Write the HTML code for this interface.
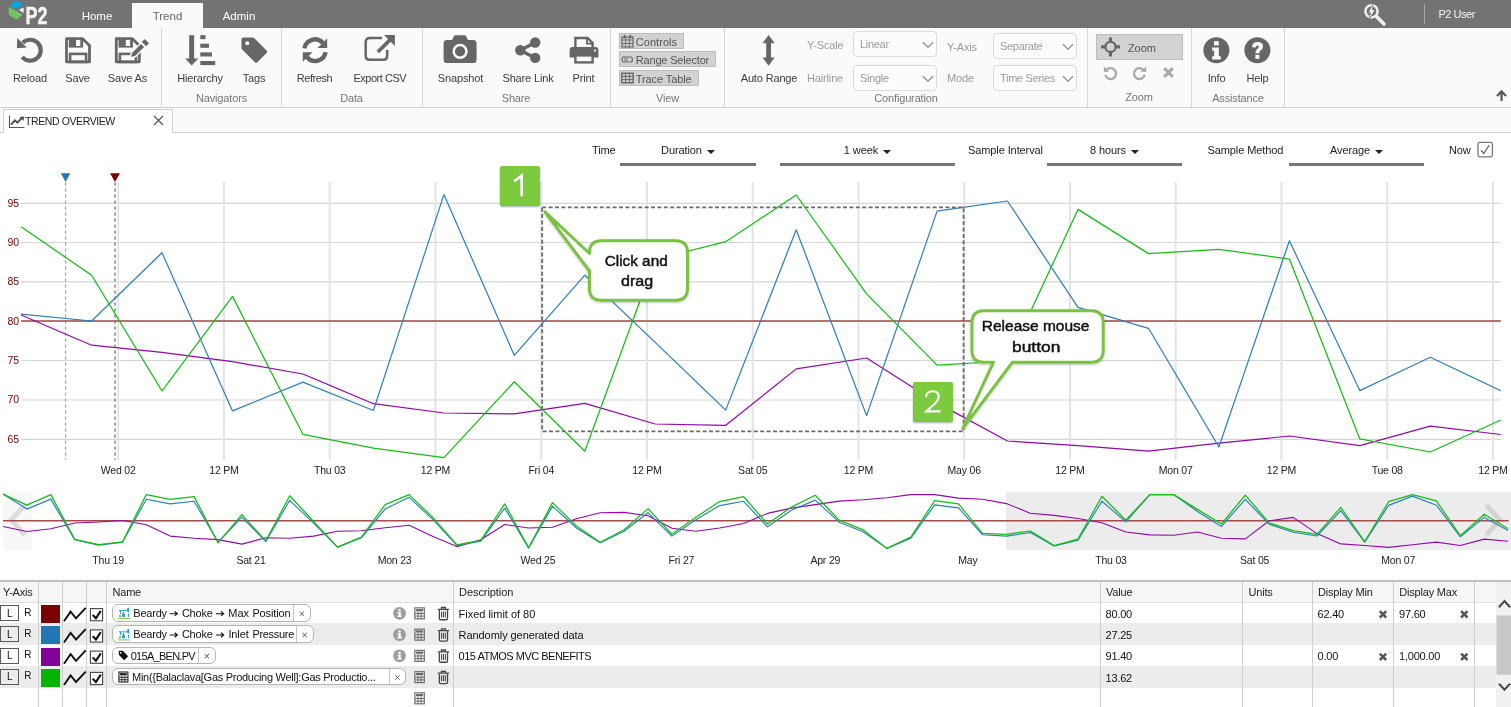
<!DOCTYPE html>
<html><head><meta charset="utf-8">
<style>
html,body{margin:0;padding:0;}
body{width:1511px;height:707px;overflow:hidden;background:#fff;font-family:"Liberation Sans",sans-serif;position:relative;color:#333;}
.abs{position:absolute;}
#topbar{left:0;top:0;width:1511px;height:28px;background:#737373;}
#ribbon{left:0;top:28px;width:1511px;height:79px;background:#fafafa;border-bottom:1px solid #d2d2d2;}
.mtab{position:absolute;top:3px;height:25px;line-height:26px;color:#fff;font-size:11.5px;text-align:center;}
.mtab.act{background:#fafafa;color:#666;}
.sep{position:absolute;top:28px;width:1px;height:79px;background:#d6d6d6;}
.rl{position:absolute;font-size:11px;color:#3c3c3c;white-space:nowrap;transform:translateX(-50%);top:71px;line-height:14px;letter-spacing:-0.15px;}
.gl{position:absolute;font-size:11px;color:#767676;white-space:nowrap;transform:translateX(-50%);top:91px;line-height:14px;letter-spacing:-0.15px;}
.ico{position:absolute;}
.cl{position:absolute;font-size:11px;color:#9a9a9a;white-space:nowrap;line-height:14px;letter-spacing:-0.15px;}
.selbox{position:absolute;width:82px;height:24px;border:1px solid #dcdcdc;border-radius:4px;background:#fcfcfc;font-size:11px;color:#9a9a9a;line-height:23px;}
.selbox span{position:absolute;left:6px;top:1px;letter-spacing:-0.3px;}
.selbox svg{position:absolute;right:2px;top:9px;}
.vbtn{position:absolute;height:13px;background:#d2d2d2;border:1px solid #bdbdbd;font-size:11px;color:#555;line-height:14px;white-space:nowrap;letter-spacing:-0.1px;}
#tabstrip{left:0;top:108px;width:1511px;height:24px;background:#fafafa;border-bottom:1px solid #d0d0d0;}
#doctab{left:3px;top:109px;width:168px;height:23px;background:#fff;border:1px solid #d0d0d0;border-bottom:none;box-sizing:content-box;}
.ctl{position:absolute;font-size:11px;color:#222;white-space:nowrap;line-height:14px;top:143px;letter-spacing:-0.1px;}
.dd{position:absolute;top:143px;height:20px;border-bottom:3px solid #767676;text-align:center;font-size:11px;color:#222;line-height:14px;white-space:nowrap;letter-spacing:-0.1px;}
.dd i{display:inline-block;width:0;height:0;border-left:4px solid transparent;border-right:4px solid transparent;border-top:4px solid #222;margin-left:5px;vertical-align:0px;}
.th{font-size:11px;color:#222;line-height:14px;white-space:nowrap;letter-spacing:-0.2px;}
.td{font-size:11px;color:#111;line-height:14px;white-space:nowrap;letter-spacing:-0.22px;}
</style></head>
<body><div id="wrap" style="position:absolute;left:0;top:0;width:1511px;height:707px;will-change:transform;">
<!--TOPBAR-->
<div id="topbar" class="abs">
<svg class="abs" style="left:0;top:0" width="60" height="28" viewBox="0 0 60 28">
<polygon points="16.3,0.6 23.2,4.2 16.3,8.7 9.8,4.8" fill="#00a8e8"/>
<polygon points="8.7,7 22.9,14.6 16.4,19.5 8.7,14.8" fill="#76c162"/>
<polygon points="18.8,9.7 23.6,7.4 23.6,12.9" fill="#f2f2f2"/>
<text x="25.4" y="23.8" font-family="Liberation Sans" font-weight="700" font-size="24.4" fill="#f2f2f2" stroke="#f2f2f2" stroke-width="0.5" textLength="22" lengthAdjust="spacingAndGlyphs">P2</text>
</svg>
<div class="mtab" style="left:70px;width:54px;">Home</div>
<div class="mtab act" style="left:132px;width:71px;">Trend</div>
<div class="mtab" style="left:210px;width:58px;">Admin</div>
<svg class="abs" style="left:1362px;top:2px" width="26" height="26" viewBox="0 0 26 26">
<circle cx="9.5" cy="9.3" r="6.1" fill="none" stroke="#f0f0f0" stroke-width="2.5"/>
<line x1="14.6" y1="14.6" x2="22" y2="22" stroke="#f0f0f0" stroke-width="3.6" stroke-linecap="round"/>
<path d="M10.8 2.4 L6.8 10.4 L9 10.4 L7.5 16.4 L12.5 8 L10 8 Z" fill="#f0f0f0" stroke="#737373" stroke-width="1.1" paint-order="stroke"/>
</svg>
<div class="abs" style="left:1424px;top:4px;width:1px;height:20px;background:#a9a9a9;"></div>
<div class="abs" style="left:1438.4px;top:7px;font-size:11px;color:#f4f4f4;line-height:14px;letter-spacing:-0.45px;">P2 User</div>
</div>
<!--RIBBON-->
<div id="ribbon" class="abs"></div>
<div class="sep" style="left:161px"></div><div class="sep" style="left:281px"></div><div class="sep" style="left:422px"></div><div class="sep" style="left:610px"></div><div class="sep" style="left:724px"></div><div class="sep" style="left:1087px"></div><div class="sep" style="left:1191px"></div><div class="sep" style="left:1284px"></div>
<div class="rl" style="left:30px">Reload</div><div class="rl" style="left:77.5px">Save</div><div class="rl" style="left:127.5px">Save As</div>
<div class="rl" style="left:200px">Hierarchy</div><div class="rl" style="left:254px">Tags</div>
<div class="rl" style="left:314.5px;letter-spacing:-0.43px">Refresh</div><div class="rl" style="left:379.8px;letter-spacing:-0.48px">Export CSV</div>
<div class="rl" style="left:460.5px">Snapshot</div><div class="rl" style="left:528px">Share Link</div><div class="rl" style="left:583.5px">Print</div>
<div class="rl" style="left:769px">Auto Range</div>
<div class="rl" style="left:1216.5px">Info</div><div class="rl" style="left:1257.5px">Help</div>
<div class="gl" style="left:221.5px">Navigators</div><div class="gl" style="left:351.5px">Data</div><div class="gl" style="left:516px">Share</div><div class="gl" style="left:667.5px">View</div><div class="gl" style="left:906px">Configuration</div><div class="gl" style="left:1139px;top:90px">Zoom</div><div class="gl" style="left:1238px">Assistance</div>
<!-- icons -->
<svg class="ico" style="left:15px;top:34px" width="32" height="32" viewBox="0 0 32 32"><path d="M7.8 8.8 A10.5 10.5 0 1 1 7.2 23" fill="none" stroke="#666" stroke-width="4.2"/><polygon points="2.2,3.9 11.8,13.4 1.9,14.2" fill="#666"/></svg>
<svg class="ico" style="left:64px;top:37px" width="28" height="28" viewBox="0 0 28 28"><path d="M2.5 1.7 H18.6 L25.5 8.6 V24.8 H2.5 Z" fill="none" stroke="#666" stroke-width="2.8" stroke-linejoin="round"/><rect x="4.8" y="1.7" width="14.3" height="8.9" fill="#666"/><rect x="12" y="2.9" width="4.3" height="6.1" fill="#f9f9f9"/><rect x="6.1" y="16.9" width="16" height="8" fill="none" stroke="#666" stroke-width="2.6"/></svg>
<svg class="ico" style="left:113px;top:37px" width="38" height="28" viewBox="0 0 38 28"><g transform="translate(0.8,0)"><path d="M2.5 1.7 H18.6 L25.5 8.6 V24.8 H2.5 Z" fill="none" stroke="#666" stroke-width="2.8" stroke-linejoin="round"/><rect x="4.8" y="1.7" width="14.3" height="8.9" fill="#666"/><rect x="12" y="2.9" width="4.3" height="6.1" fill="#f9f9f9"/><rect x="6.1" y="16.9" width="16" height="8" fill="none" stroke="#666" stroke-width="2.6"/></g><polygon points="17,21 18.5,15.5 28.1,5.9 32.1,9.9 22.5,19.5" fill="#666" stroke="#fafafa" stroke-width="1.4"/><polygon points="29.6,4.9 31.7,2.8 35.2,6.3 33.1,8.4" fill="#666" stroke="#666" stroke-width="1.2" stroke-linejoin="round"/></svg>
<svg class="ico" style="left:184px;top:34px" width="34" height="34" viewBox="0 0 34 34"><rect x="5.2" y="1.2" width="4.9" height="24" fill="#666"/><polygon points="1.2,24.4 14.2,24.4 7.7,31.4" fill="#666"/><rect x="16.3" y="1.1" width="5.2" height="4.1" fill="#666"/><rect x="16.3" y="9.7" width="8.7" height="4.1" fill="#666"/><rect x="16.3" y="18.4" width="11.7" height="4.1" fill="#666"/><rect x="16.3" y="27" width="14.9" height="4.1" fill="#666"/></svg>
<svg class="ico" style="left:240px;top:36px" width="30" height="30" viewBox="0 0 30.8 30.8"><path d="M1.5 3.4 Q1.5 1.5 3.4 1.5 H12.5 Q14 1.5 15 2.5 L27.3 14.8 Q28.6 16.1 27.3 17.4 L17.8 26.9 Q16.5 28.2 15.2 26.9 L2.5 14.2 Q1.5 13.2 1.5 11.8 Z" fill="#666"/><circle cx="7.4" cy="7.4" r="2.1" fill="#fafafa"/></svg>
<svg class="ico" style="left:300px;top:35px" width="30" height="30" viewBox="0 0 30 30"><g transform="translate(15,15.2) scale(0.95) translate(-15,-15)"><path d="M3.8 13 A11.2 11.2 0 0 1 23.4 7.6" fill="none" stroke="#666" stroke-width="4.6"/><polygon points="27.8,2.8 27.8,12.8 17.6,12.8" fill="#666"/><path d="M26.2 17 A11.2 11.2 0 0 1 6.6 22.4" fill="none" stroke="#666" stroke-width="4.6"/><polygon points="2.2,27.2 2.2,17.2 12.4,17.2" fill="#666"/></g></svg>
<svg class="ico" style="left:363px;top:33px" width="34" height="32" viewBox="0 0 34 32"><path d="M19 5.1 H6.7 Q2.7 5.1 2.7 9.1 V22.8 Q2.7 26.8 6.7 26.8 H20.2 Q24.2 26.8 24.2 22.8 V17" fill="none" stroke="#666" stroke-width="2.5"/><line x1="14.8" y1="19" x2="27.5" y2="6.4" stroke="#666" stroke-width="3.7"/><polygon points="21,2.1 31.9,2 31.9,12.9" fill="#666"/></svg>
<svg class="ico" style="left:442px;top:33px" width="36" height="32" viewBox="0 0 36 32"><path d="M5 7 H10 L12 3.2 Q12.5 2.2 13.8 2.2 H22.2 Q23.5 2.2 24 3.2 L26 7 H31 Q34.6 7 34.6 10.6 V26.4 Q34.6 30 31 30 H5 Q1.6 30 1.6 26.4 V10.6 Q1.6 7 5 7 Z" fill="#666"/><circle cx="18.1" cy="18.4" r="6.4" fill="none" stroke="#f9f9f9" stroke-width="2.6"/></svg>
<svg class="ico" style="left:513px;top:35px" width="30" height="30" viewBox="0 0 30 30"><circle cx="22.2" cy="7.5" r="5.2" fill="#666"/><circle cx="7.3" cy="15.2" r="5.2" fill="#666"/><circle cx="22.2" cy="22.9" r="5.2" fill="#666"/><path d="M22.2 7.5 L7.3 15.2 L22.2 22.9" fill="none" stroke="#666" stroke-width="3.4"/></svg>
<svg class="ico" style="left:568px;top:35px" width="32" height="30" viewBox="0 0 32 30"><path d="M7.4 13 V3 H19.6 L24.6 8 V13" fill="none" stroke="#666" stroke-width="2.4"/><path d="M19 3 V8.6 H24.6" fill="none" stroke="#666" stroke-width="1.8"/><path d="M4.6 12 H27.4 Q30.4 12 30.4 15 V22.6 H1.6 V15 Q1.6 12 4.6 12 Z" fill="#666"/><rect x="7.4" y="20.4" width="17.2" height="7" fill="#f9f9f9" stroke="#666" stroke-width="2.4"/><circle cx="27" cy="15.6" r="1.1" fill="#f9f9f9"/></svg>
<svg class="ico" style="left:758px;top:34px" width="22" height="33" viewBox="0 0 22 33"><rect x="8.2" y="7" width="4.8" height="18" fill="#666"/><polygon points="10.6,1 16.7,9.2 4.5,9.2" fill="#666"/><polygon points="10.6,31.7 16.7,23.5 4.5,23.5" fill="#666"/></svg>
<!-- view buttons -->
<div class="vbtn" style="left:619px;top:33px;width:63px;height:14px;letter-spacing:0.04px"><span style="position:absolute;left:15.8px;top:1px">Controls</span></div>
<div class="vbtn" style="left:619px;top:51px;width:95px;height:14px;letter-spacing:-0.18px"><span style="position:absolute;left:15.8px;top:1px">Range Selector</span></div>
<div class="vbtn" style="left:619px;top:70px;width:78px;height:14px;letter-spacing:-0.1px"><span style="position:absolute;left:15.8px;top:0.6px">Trace Table</span></div>
<svg class="ico" style="left:621px;top:34px" width="13" height="14" viewBox="0 0 13 14"><rect x="1" y="3" width="11" height="10" fill="none" stroke="#666" stroke-width="1.2"/><path d="M1 6H12M1 9.5H12M4.6 3V13M8.3 3V13" stroke="#666" stroke-width="0.9"/><rect x="2.8" y="0.8" width="1.6" height="3.4" fill="#666"/><rect x="8.6" y="0.8" width="1.6" height="3.4" fill="#666"/></svg>
<svg class="ico" style="left:621px;top:55px" width="13" height="9" viewBox="0 0 13 9"><rect x="1.2" y="2" width="10" height="5" rx="1.2" fill="none" stroke="#666" stroke-width="1.2"/><path d="M4 2.6V6.4M6 2.6V6.4" stroke="#666" stroke-width="0.9"/></svg>
<svg class="ico" style="left:621px;top:72px" width="13" height="12" viewBox="0 0 13 12"><rect x="0.8" y="1.2" width="11.4" height="9.6" fill="none" stroke="#666" stroke-width="1.4"/><path d="M1 4.4H12M1 7.6H12M4.6 1.4V10.6M8.4 1.4V10.6" stroke="#666" stroke-width="1"/></svg>
<!-- config -->
<div class="cl" style="left:807px;top:38px">Y-Scale</div><div class="cl" style="left:807px;top:71px">Hairline</div>
<div class="cl" style="left:947px;top:40px">Y-Axis</div><div class="cl" style="left:947px;top:71px">Mode</div>
<div class="selbox" style="left:853px;top:31px"><span>Linear</span><svg width="12" height="8" viewBox="0 0 12 8"><path d="M1 1.2 L6 6.2 L11 1.2" fill="none" stroke="#999" stroke-width="1.6"/></svg></div>
<div class="selbox" style="left:853px;top:65px"><span>Single</span><svg width="12" height="8" viewBox="0 0 12 8"><path d="M1 1.2 L6 6.2 L11 1.2" fill="none" stroke="#999" stroke-width="1.6"/></svg></div>
<div class="selbox" style="left:993px;top:33px"><span>Separate</span><svg width="12" height="8" viewBox="0 0 12 8"><path d="M1 1.2 L6 6.2 L11 1.2" fill="none" stroke="#999" stroke-width="1.6"/></svg></div>
<div class="selbox" style="left:993px;top:65px"><span>Time Series</span><svg width="12" height="8" viewBox="0 0 12 8"><path d="M1 1.2 L6 6.2 L11 1.2" fill="none" stroke="#999" stroke-width="1.6"/></svg></div>
<!-- zoom group -->
<div class="abs" style="left:1096px;top:34px;width:85px;height:24px;background:#d2d2d2;border:1px solid #bdbdbd;"></div>
<div class="abs" style="left:1128px;top:41px;font-size:11px;color:#555;line-height:14px;letter-spacing:-0.1px">Zoom</div>
<svg class="ico" style="left:1100px;top:36px" width="22" height="22" viewBox="0 0 22 22"><circle cx="10.5" cy="10.9" r="5.1" fill="none" stroke="#666" stroke-width="2.3"/><path d="M10.5 1.4V6M10.5 15.8V20.4M1 10.9H5.6M15.4 10.9H20" stroke="#666" stroke-width="3.1"/></svg>
<svg class="ico" style="left:1103px;top:64.6px" width="16" height="16" viewBox="0 0 16 16"><path d="M3.6 5 A5.4 5.4 0 1 1 2.3 9.6" fill="none" stroke="#aaa" stroke-width="2.3"/><polygon points="0.8,1.6 6.6,6.6 0.8,7" fill="#aaa"/></svg>
<svg class="ico" style="left:1131px;top:64.6px" width="16" height="16" viewBox="0 0 16 16"><path d="M12.4 5 A5.4 5.4 0 1 0 13.7 9.6" fill="none" stroke="#aaa" stroke-width="2.3"/><polygon points="15.2,1.6 9.4,6.6 15.2,7" fill="#aaa"/></svg>
<svg class="ico" style="left:1162px;top:66.2px" width="13" height="13" viewBox="0 0 13 13"><path d="M2.2 2.2L10.8 10.8M10.8 2.2L2.2 10.8" stroke="#aaa" stroke-width="3.2"/></svg>
<!-- assistance -->
<svg class="ico" style="left:1203px;top:37px" width="27" height="27" viewBox="0 0 27 27"><circle cx="13.4" cy="13.3" r="13" fill="#666"/><rect x="11" y="4.2" width="4.8" height="4.2" fill="#fafafa"/><path d="M9.2 10.6H15.8V19.2H17.8V22.4H9.2V19.2H11.2V13.8H9.2Z" fill="#fafafa"/></svg>
<svg class="ico" style="left:1244px;top:37px" width="27" height="27" viewBox="0 0 27 27"><circle cx="13.4" cy="13.3" r="13" fill="#666"/><path d="M8 10.2 Q8.4 5 13.6 5 Q19 5 19 9.6 Q19 12.2 16.6 13.6 Q15.4 14.4 15.4 16.2 H11.4 Q11.2 13.2 13.6 11.8 Q14.8 11 14.8 10 Q14.8 8.6 13.4 8.6 Q12 8.6 11.8 10.4 Z" fill="#fafafa"/><rect x="11.4" y="17.8" width="4" height="4" fill="#fafafa"/></svg>
<svg class="ico" style="left:1495px;top:89px" width="13" height="13" viewBox="0 0 13 13"><path d="M6.5 12V3" stroke="#555" stroke-width="2.2"/><path d="M2 7L6.5 2.4L11 7" fill="none" stroke="#555" stroke-width="2.2"/></svg>
<!--TABSTRIP-->
<div id="tabstrip" class="abs"></div>
<div id="doctab" class="abs"></div>
<svg class="abs" style="left:8px;top:114px" width="18" height="16" viewBox="0 0 18 16"><path d="M1.5 1.5V13.5H16.5" fill="none" stroke="#555" stroke-width="1.1"/><path d="M3 10.6L7 6.4L9.4 8.6L13.6 4.2" fill="none" stroke="#4a4a4a" stroke-width="1.9"/><polygon points="11.6,3 16,2.6 15.6,7" fill="#4a4a4a"/></svg>
<div class="abs" style="left:25px;top:114px;font-size:10.5px;line-height:14px;color:#222;letter-spacing:-0.4px;">TREND OVERVIEW</div>
<svg class="abs" style="left:153px;top:115px" width="11" height="11" viewBox="0 0 11 11"><path d="M1 1L10 10M10 1L1 10" stroke="#555" stroke-width="1.2"/></svg>
<div class="ctl" style="left:592px">Time</div>
<div class="dd" style="left:620px;width:136px;">Duration<i></i></div>
<div class="dd" style="left:780px;width:175px;">1 week<i></i></div>
<div class="ctl" style="left:968px">Sample Interval</div>
<div class="dd" style="left:1047px;width:135px;">8 hours<i></i></div>
<div class="ctl" style="left:1207.5px">Sample Method</div>
<div class="dd" style="left:1289px;width:135px;">Average<i></i></div>
<div class="ctl" style="left:1449px">Now</div>
<svg class="abs" style="left:1477px;top:141px" width="17" height="17" viewBox="0 0 17 17"><rect x="1" y="1.4" width="14.4" height="14.4" rx="1.8" fill="#fff" stroke="#777" stroke-width="1.3"/><path d="M4 9.2L6.8 12.4L12.2 4.2" fill="none" stroke="#6a6a6a" stroke-width="1.3"/></svg>
<!--CONTROLS-->
<!--CHART-->
<svg class="abs" style="left:0;top:0" width="1511" height="707" viewBox="0 0 1511 707">
<line x1="21" y1="203.3" x2="1500.8" y2="203.3" stroke="#d5d5d5" stroke-width="1.15"/>
<line x1="21" y1="242.5" x2="1500.8" y2="242.5" stroke="#d5d5d5" stroke-width="1.15"/>
<line x1="21" y1="281.9" x2="1500.8" y2="281.9" stroke="#d5d5d5" stroke-width="1.15"/>
<line x1="21" y1="321.2" x2="1500.8" y2="321.2" stroke="#d5d5d5" stroke-width="1.15"/>
<line x1="21" y1="360.5" x2="1500.8" y2="360.5" stroke="#d5d5d5" stroke-width="1.15"/>
<line x1="21" y1="400.0" x2="1500.8" y2="400.0" stroke="#d5d5d5" stroke-width="1.15"/>
<line x1="21" y1="439.3" x2="1500.8" y2="439.3" stroke="#d5d5d5" stroke-width="1.15"/>
<line x1="118.20" y1="182" x2="118.20" y2="460" stroke="#e4e4e4" stroke-width="2"/>
<line x1="223.95" y1="182" x2="223.95" y2="460" stroke="#e4e4e4" stroke-width="2"/>
<line x1="329.71" y1="182" x2="329.71" y2="460" stroke="#e4e4e4" stroke-width="2"/>
<line x1="435.46" y1="182" x2="435.46" y2="460" stroke="#e4e4e4" stroke-width="2"/>
<line x1="541.22" y1="182" x2="541.22" y2="460" stroke="#e4e4e4" stroke-width="2"/>
<line x1="646.97" y1="182" x2="646.97" y2="460" stroke="#e4e4e4" stroke-width="2"/>
<line x1="752.72" y1="182" x2="752.72" y2="460" stroke="#e4e4e4" stroke-width="2"/>
<line x1="858.48" y1="182" x2="858.48" y2="460" stroke="#e4e4e4" stroke-width="2"/>
<line x1="964.23" y1="182" x2="964.23" y2="460" stroke="#e4e4e4" stroke-width="2"/>
<line x1="1069.99" y1="182" x2="1069.99" y2="460" stroke="#e4e4e4" stroke-width="2"/>
<line x1="1175.74" y1="182" x2="1175.74" y2="460" stroke="#e4e4e4" stroke-width="2"/>
<line x1="1281.49" y1="182" x2="1281.49" y2="460" stroke="#e4e4e4" stroke-width="2"/>
<line x1="1387.25" y1="182" x2="1387.25" y2="460" stroke="#e4e4e4" stroke-width="2"/>
<line x1="1493.00" y1="182" x2="1493.00" y2="460" stroke="#e4e4e4" stroke-width="2"/>
<line x1="65.6" y1="182.6" x2="65.6" y2="460" stroke="#9c9c9c" stroke-width="1.1" stroke-dasharray="3.2,2.8"/>
<line x1="115.05" y1="182.6" x2="115.05" y2="460" stroke="#a4a4a4" stroke-width="2" stroke-dasharray="3.2,2.8"/>
<polygon points="60.9,173.2 70.3,173.2 65.6,182" fill="#1f77b4"/>
<polygon points="110.1,173.2 119.9,173.2 115,182.1" fill="#7b0000"/>
<line x1="21" y1="321" x2="1500.8" y2="321" stroke="#a64a4a" stroke-width="1.7"/>
<polyline points="21.1,315.0 91.6,345.2 162.0,352.4 232.5,361.7 302.9,374.0 373.4,403.7 443.9,413.0 514.3,413.9 584.8,403.3 655.2,424.0 725.7,425.3 796.2,368.9 866.6,358.0 937.1,402.9 1007.5,441.0 1078.0,445.7 1148.5,451.2 1218.9,443.2 1289.4,436.0 1359.8,445.7 1430.3,426.2 1500.8,434.5" fill="none" stroke="#9208aa" stroke-width="1.2" stroke-linejoin="round"/>
<polyline points="21.1,314.2 91.6,321.0 162.0,252.7 232.5,410.9 302.9,382.1 373.4,410.5 443.9,194.6 514.3,355.4 584.8,275.2 655.2,342.4 725.7,410.1 796.2,229.8 866.6,415.6 937.1,211.1 1007.5,201.0 1078.0,307.4 1148.5,328.3 1218.9,447.0 1289.4,240.8 1359.8,390.6 1430.3,357.3 1500.8,390.7" fill="none" stroke="#2a7fbd" stroke-width="1.2" stroke-linejoin="round"/>
<polyline points="21.1,226.8 91.6,275.2 162.0,391.0 232.5,296.4 302.9,434.3 373.4,448.2 443.9,457.6 514.3,381.7 584.8,451.2 655.2,259.5 725.7,241.7 796.2,195.0 866.6,293.9 937.1,365.1 1007.5,361.0 1078.0,209.4 1148.5,253.6 1218.9,249.3 1289.4,259.1 1359.8,438.9 1430.3,452.0 1500.8,420.0" fill="none" stroke="#16bd16" stroke-width="1.25" stroke-linejoin="round"/>
<rect x="542.2" y="207.3" width="421.4" height="224" fill="none" stroke="#6a6a6a" stroke-width="1.8" stroke-dasharray="4,2.4"/>
<text x="7.4" y="206.7" font-family="Liberation Sans" font-size="10.5" fill="#7b0000">95</text>
<text x="7.4" y="245.9" font-family="Liberation Sans" font-size="10.5" fill="#7b0000">90</text>
<text x="7.4" y="285.3" font-family="Liberation Sans" font-size="10.5" fill="#7b0000">85</text>
<text x="7.4" y="324.6" font-family="Liberation Sans" font-size="10.5" fill="#7b0000">80</text>
<text x="7.4" y="363.9" font-family="Liberation Sans" font-size="10.5" fill="#7b0000">75</text>
<text x="7.4" y="403.4" font-family="Liberation Sans" font-size="10.5" fill="#7b0000">70</text>
<text x="7.4" y="442.7" font-family="Liberation Sans" font-size="10.5" fill="#7b0000">65</text>
<text x="118.2" y="474.3" text-anchor="middle" font-family="Liberation Sans" font-size="10.5" fill="#222" letter-spacing="-0.2">Wed 02</text>
<text x="224.0" y="474.3" text-anchor="middle" font-family="Liberation Sans" font-size="10.5" fill="#222" letter-spacing="-0.2">12 PM</text>
<text x="329.7" y="474.3" text-anchor="middle" font-family="Liberation Sans" font-size="10.5" fill="#222" letter-spacing="-0.2">Thu 03</text>
<text x="435.5" y="474.3" text-anchor="middle" font-family="Liberation Sans" font-size="10.5" fill="#222" letter-spacing="-0.2">12 PM</text>
<text x="541.2" y="474.3" text-anchor="middle" font-family="Liberation Sans" font-size="10.5" fill="#222" letter-spacing="-0.2">Fri 04</text>
<text x="647.0" y="474.3" text-anchor="middle" font-family="Liberation Sans" font-size="10.5" fill="#222" letter-spacing="-0.2">12 PM</text>
<text x="752.7" y="474.3" text-anchor="middle" font-family="Liberation Sans" font-size="10.5" fill="#222" letter-spacing="-0.2">Sat 05</text>
<text x="858.5" y="474.3" text-anchor="middle" font-family="Liberation Sans" font-size="10.5" fill="#222" letter-spacing="-0.2">12 PM</text>
<text x="964.2" y="474.3" text-anchor="middle" font-family="Liberation Sans" font-size="10.5" fill="#222" letter-spacing="-0.2">May 06</text>
<text x="1070.0" y="474.3" text-anchor="middle" font-family="Liberation Sans" font-size="10.5" fill="#222" letter-spacing="-0.2">12 PM</text>
<text x="1175.7" y="474.3" text-anchor="middle" font-family="Liberation Sans" font-size="10.5" fill="#222" letter-spacing="-0.2">Mon 07</text>
<text x="1281.5" y="474.3" text-anchor="middle" font-family="Liberation Sans" font-size="10.5" fill="#222" letter-spacing="-0.2">12 PM</text>
<text x="1387.2" y="474.3" text-anchor="middle" font-family="Liberation Sans" font-size="10.5" fill="#222" letter-spacing="-0.2">Tue 08</text>
<text x="1493.0" y="474.3" text-anchor="middle" font-family="Liberation Sans" font-size="10.5" fill="#222" letter-spacing="-0.2">12 PM</text>
</svg>
<div class="abs" style="left:500px;top:166px;width:40px;height:39.5px;background:#7ccb3f;border-radius:2px;box-shadow:0 1px 2px rgba(0,0,0,.35);"></div>
<div class="abs" style="left:913px;top:382px;width:40px;height:39.5px;background:#7ccb3f;border-radius:2px;box-shadow:0 1px 2px rgba(0,0,0,.35);"></div>
<svg class="abs" style="left:0;top:0" width="1511" height="707" viewBox="0 0 1511 707">
<defs><filter id="sh" x="-10%" y="-10%" width="120%" height="130%"><feDropShadow dx="0" dy="1" stdDeviation="1" flood-color="#000" flood-opacity="0.25"/></filter></defs>
<path d="M514.2 181.2 L521.7 175.6 V196.2" fill="none" stroke="#fff" stroke-width="2.6" stroke-linejoin="miter"/>
<path d="M926 397.2 C926.4 392.6 929.4 391.2 932.7 391.2 C936.6 391.2 938.7 393.6 938.7 396.7 C938.7 400.2 936 402.8 932.6 405.8 L926.2 411.4 H940.6" fill="none" stroke="#fff" stroke-width="2.1"/>
<path d="M601.5 240.8 H675.5 Q687.5 240.8 687.5 252.8 V288.2 Q687.5 300.2 675.5 300.2 H601.5 Q589.5 300.2 589.5 288.2 V271 L545 211.8 L589.5 253.5 V252.8 Q589.5 240.8 601.5 240.8 Z" fill="#fff" stroke="#7cc243" stroke-width="3" stroke-linejoin="round" filter="url(#sh)"/>
<path d="M984 310.8 H1091 Q1103.2 310.8 1103.2 322.8 V350.2 Q1103.2 362.2 1091 362.2 H1012.5 L962.8 428.4 L993.5 362.2 H984 Q972 362.2 972 350.2 V322.8 Q972 310.8 984 310.8 Z" fill="#fff" stroke="#7cc243" stroke-width="3" stroke-linejoin="round" filter="url(#sh)"/>
</svg>
<svg class="abs" style="left:0;top:0" width="1511" height="707" viewBox="0 0 1511 707"><g font-family="Liberation Sans" font-size="15.3" fill="#111" stroke="#111" stroke-width="0.45" lengthAdjust="spacingAndGlyphs">
<text x="604.7" y="265.8" textLength="63" lengthAdjust="spacingAndGlyphs">Click and</text><text x="621" y="286.4" textLength="32.2" lengthAdjust="spacingAndGlyphs">drag</text>
<text x="981.8" y="330.8" textLength="107.6" lengthAdjust="spacingAndGlyphs">Release mouse</text><text x="1012" y="351.5" textLength="48.4" lengthAdjust="spacingAndGlyphs">button</text></g></svg>
<!--RANGE-->
<svg class="abs" style="left:0;top:0" width="1511" height="707" viewBox="0 0 1511 707">
<rect x="1006" y="492" width="505" height="58" fill="#ececec"/>
<rect x="3" y="492" width="29" height="58" fill="#f8f8f8"/>
<path d="M25 505 L11 520 L25 535" fill="none" stroke="#dcdcdc" stroke-width="5"/>
<path d="M1486 505 L1500 520 L1486 535" fill="none" stroke="#d4d4d4" stroke-width="5"/>
<line x1="3" y1="520.7" x2="1508.7" y2="520.7" stroke="#a64a4a" stroke-width="1.6"/>
<polyline points="3.0,526.5 26.9,531.5 50.8,528.8 74.7,523.0 98.6,522.0 122.5,520.5 146.3,524.7 170.2,536.1 194.1,538.3 218.0,539.6 241.9,544.1 265.8,537.8 289.7,538.3 313.6,536.1 337.5,531.3 361.4,530.8 385.2,527.8 409.1,525.2 433.0,536.6 456.9,546.6 480.8,539.8 504.7,524.5 528.6,528.0 552.5,527.3 576.4,518.7 600.2,512.7 624.1,512.4 648.0,515.7 671.9,528.3 695.8,531.3 719.7,528.0 743.6,523.5 767.5,513.4 791.4,508.1 815.3,504.6 839.1,501.1 863.0,499.8 886.9,497.8 910.8,494.6 934.7,494.6 958.6,498.1 982.5,499.3 1006.4,503.6 1030.3,513.2 1054.2,515.4 1078.0,518.5 1101.9,522.7 1125.8,532.0 1149.7,534.9 1173.6,535.2 1197.5,532.0 1221.4,538.3 1245.3,538.9 1269.2,520.8 1293.1,517.4 1317.0,533.6 1340.8,543.9 1364.7,545.5 1388.6,547.4 1412.5,544.7 1436.4,542.1 1460.3,545.5 1484.2,539.1 1508.1,541.3" fill="none" stroke="#9208aa" stroke-width="1.1" stroke-linejoin="round"/>
<polyline points="3.0,494.1 26.9,509.1 50.8,499.1 74.7,539.8 98.6,545.1 122.5,542.3 146.3,499.3 170.2,503.9 194.1,501.3 218.0,542.3 241.9,517.2 265.8,541.6 289.7,500.3 313.6,523.2 337.5,547.1 361.4,537.8 385.2,508.9 409.1,497.3 433.0,519.7 456.9,545.4 480.8,541.3 504.7,508.1 528.6,547.9 552.5,506.1 576.4,528.0 600.2,542.8 624.1,531.3 648.0,512.7 671.9,536.1 695.8,519.7 719.7,505.6 743.6,501.3 767.5,526.8 791.4,510.2 815.3,500.1 839.1,522.2 863.0,531.8 886.9,548.4 910.8,538.1 934.7,504.9 958.6,507.9 982.5,534.8 1006.4,536.1 1030.3,532.5 1054.2,545.9 1078.0,540.1 1101.9,501.3 1125.8,521.9 1149.7,494.8 1173.6,494.6 1197.5,511.5 1221.4,526.4 1245.3,499.3 1269.2,524.3 1293.1,532.2 1317.0,536.0 1340.8,510.7 1364.7,542.1 1388.6,505.4 1412.5,496.1 1436.4,505.2 1460.3,536.8 1484.2,517.4 1508.1,530.6" fill="none" stroke="#2a7fbd" stroke-width="1.15" stroke-linejoin="round"/>
<polyline points="3.0,494.1 26.9,505.1 50.8,494.6 74.7,539.3 98.6,544.6 122.5,541.8 146.3,494.6 170.2,499.3 194.1,496.6 218.0,542.8 241.9,514.7 265.8,540.8 289.7,495.8 313.6,521.5 337.5,547.1 361.4,537.1 385.2,504.6 409.1,494.6 433.0,517.7 456.9,544.9 480.8,540.3 504.7,503.9 528.6,547.9 552.5,502.6 576.4,526.0 600.2,542.3 624.1,529.8 648.0,508.6 671.9,534.3 695.8,517.2 719.7,501.6 743.6,496.6 767.5,524.0 791.4,507.1 815.3,495.3 839.1,520.2 863.0,529.8 886.9,548.4 910.8,537.1 934.7,500.6 958.6,503.9 982.5,533.3 1006.4,534.3 1030.3,531.0 1054.2,545.6 1078.0,539.1 1101.9,496.3 1125.8,520.3 1149.7,494.6 1173.6,494.6 1197.5,509.4 1221.4,524.0 1245.3,495.1 1269.2,523.0 1293.1,530.6 1317.0,534.4 1340.8,507.3 1364.7,541.5 1388.6,501.7 1412.5,494.6 1436.4,500.9 1460.3,535.7 1484.2,514.2 1508.1,528.8" fill="none" stroke="#16bd16" stroke-width="1.25" stroke-linejoin="round"/>
<text x="108.1" y="563.8" text-anchor="middle" font-family="Liberation Sans" font-size="10.5" fill="#222" letter-spacing="-0.2">Thu 19</text>
<text x="251.0" y="563.8" text-anchor="middle" font-family="Liberation Sans" font-size="10.5" fill="#222" letter-spacing="-0.2">Sat 21</text>
<text x="394.6" y="563.8" text-anchor="middle" font-family="Liberation Sans" font-size="10.5" fill="#222" letter-spacing="-0.2">Mon 23</text>
<text x="538.0" y="563.8" text-anchor="middle" font-family="Liberation Sans" font-size="10.5" fill="#222" letter-spacing="-0.2">Wed 25</text>
<text x="681.4" y="563.8" text-anchor="middle" font-family="Liberation Sans" font-size="10.5" fill="#222" letter-spacing="-0.2">Fri 27</text>
<text x="825.3" y="563.8" text-anchor="middle" font-family="Liberation Sans" font-size="10.5" fill="#222" letter-spacing="-0.2">Apr 29</text>
<text x="967.9" y="563.8" text-anchor="middle" font-family="Liberation Sans" font-size="10.5" fill="#222" letter-spacing="-0.2">May</text>
<text x="1111.0" y="563.8" text-anchor="middle" font-family="Liberation Sans" font-size="10.5" fill="#222" letter-spacing="-0.2">Thu 03</text>
<text x="1254.6" y="563.8" text-anchor="middle" font-family="Liberation Sans" font-size="10.5" fill="#222" letter-spacing="-0.2">Sat 05</text>
<text x="1398.2" y="563.8" text-anchor="middle" font-family="Liberation Sans" font-size="10.5" fill="#222" letter-spacing="-0.2">Mon 07</text>
</svg>
<!--TABLE-->
<div class="abs" style="left:0;top:580px;width:1511px;height:2px;background:#c2c2c2;"></div>
<div class="abs" style="left:0;top:582px;width:1496px;height:20px;background:#f6f6f6;border-bottom:1px solid #dedede;"></div>
<div class="abs" style="left:0;top:623px;width:1496px;height:22px;background:#ececec;"></div>
<div class="abs" style="left:0;top:666px;width:1496px;height:22px;background:#ececec;"></div>
<div class="abs" style="left:38.1px;top:582px;width:1px;height:125px;background:#cfcfcf;"></div>
<div class="abs" style="left:62.0px;top:582px;width:1px;height:125px;background:#cfcfcf;"></div>
<div class="abs" style="left:85.9px;top:582px;width:1px;height:125px;background:#cfcfcf;"></div>
<div class="abs" style="left:106.1px;top:582px;width:1px;height:125px;background:#cfcfcf;"></div>
<div class="abs" style="left:452.8px;top:582px;width:1px;height:125px;background:#cfcfcf;"></div>
<div class="abs" style="left:1099.9px;top:582px;width:1px;height:125px;background:#cfcfcf;"></div>
<div class="abs" style="left:1242.0px;top:582px;width:1px;height:125px;background:#cfcfcf;"></div>
<div class="abs" style="left:1312.0px;top:582px;width:1px;height:125px;background:#cfcfcf;"></div>
<div class="abs" style="left:1392.8px;top:582px;width:1px;height:125px;background:#cfcfcf;"></div>
<div class="abs" style="left:1474.0px;top:582px;width:1px;height:125px;background:#cfcfcf;"></div>
<div class="abs th" style="left:3.0px;top:585px;">Y-Axis</div>
<div class="abs th" style="left:112.5px;top:585px;">Name</div>
<div class="abs th" style="left:459.0px;top:585px;"><span style="letter-spacing:-0.06px">Description</span></div>
<div class="abs th" style="left:1106.0px;top:585px;">Value</div>
<div class="abs th" style="left:1248.5px;top:585px;">Units</div>
<div class="abs th" style="left:1318.0px;top:585px;">Display Min</div>
<div class="abs th" style="left:1399.3px;top:585px;">Display Max</div>
<div class="abs" style="left:0px;top:605.1px;width:17px;height:14px;border:1px solid #5a5a5a;background:#fff;"></div>
<div class="abs td" style="left:7px;top:606.6px;font-size:10px;">L</div>
<div class="abs td" style="left:24.2px;top:605.5px;font-size:10px;">R</div>
<div class="abs" style="left:41px;top:605.1px;width:19px;height:18px;background:#7b0000;"></div>
<div class="abs" style="left:112px;top:604.1px;width:196.9px;height:15.5px;border:1px solid #b4b4b4;border-radius:6px;background:#fff;"></div>
<div class="abs" style="left:293.3px;top:605.1px;width:1px;height:15.5px;background:#c4c4c4;"></div>
<div class="abs td" style="left:133.3px;top:606.1px;letter-spacing:-0.22px;">Beardy</div>
<div class="abs td" style="left:181.9px;top:606.1px;letter-spacing:-0.22px;">Choke</div>
<div class="abs td" style="left:228.3px;top:606.1px;letter-spacing:-0.05px;">Max</div>
<div class="abs td" style="left:252.4px;top:606.1px;letter-spacing:-0.12px;">Position</div>
<div class="abs td" style="left:458.6px;top:606.9px;letter-spacing:-0.02px">Fixed limit of 80</div>
<div class="abs td" style="left:1105.6px;top:606.9px;">80.00</div>
<div class="abs td" style="left:1317.5px;top:606.9px;">62.40</div>
<div class="abs td" style="left:1399px;top:606.9px;">97.60</div>
<div class="abs" style="left:0px;top:626.4px;width:17px;height:14px;border:1px solid #5a5a5a;background:#ececec;"></div>
<div class="abs td" style="left:7px;top:627.9px;font-size:10px;">L</div>
<div class="abs td" style="left:24.2px;top:626.8px;font-size:10px;">R</div>
<div class="abs" style="left:41px;top:626.4px;width:19px;height:18px;background:#1f77b4;"></div>
<div class="abs" style="left:112px;top:625.4px;width:199.5px;height:15.5px;border:1px solid #b4b4b4;border-radius:6px;background:#fff;"></div>
<div class="abs" style="left:296.0px;top:626.4px;width:1px;height:15.5px;background:#c4c4c4;"></div>
<div class="abs td" style="left:133.3px;top:627.4px;letter-spacing:-0.22px;">Beardy</div>
<div class="abs td" style="left:181.9px;top:627.4px;letter-spacing:-0.22px;">Choke</div>
<div class="abs td" style="left:228.4px;top:627.4px;letter-spacing:-0.10px;">Inlet</div>
<div class="abs td" style="left:252.4px;top:627.4px;letter-spacing:-0.30px;">Pressure</div>
<div class="abs td" style="left:458.6px;top:628.1px;letter-spacing:-0.07px">Randomly generated data</div>
<div class="abs td" style="left:1105.6px;top:628.1px;">27.25</div>
<div class="abs" style="left:0px;top:647.6px;width:17px;height:14px;border:1px solid #5a5a5a;background:#fff;"></div>
<div class="abs td" style="left:7px;top:649.1px;font-size:10px;">L</div>
<div class="abs td" style="left:24.2px;top:648.0px;font-size:10px;">R</div>
<div class="abs" style="left:41px;top:647.6px;width:19px;height:18px;background:#800099;"></div>
<div class="abs" style="left:112px;top:646.6px;width:102.0px;height:15.5px;border:1px solid #b4b4b4;border-radius:6px;background:#fff;"></div>
<div class="abs" style="left:198.0px;top:647.6px;width:1px;height:15.5px;background:#c4c4c4;"></div>
<div class="abs td" style="left:130.7px;top:648.6px;letter-spacing:-0.72px;">015A_BEN.PV</div>
<div class="abs td" style="left:458.6px;top:649.4px;letter-spacing:-0.50px">015 ATMOS MVC BENEFITS</div>
<div class="abs td" style="left:1105.6px;top:649.4px;">91.40</div>
<div class="abs td" style="left:1317.5px;top:649.4px;">0.00</div>
<div class="abs td" style="left:1399px;top:649.4px;">1,000.00</div>
<div class="abs" style="left:0px;top:668.9px;width:17px;height:14px;border:1px solid #5a5a5a;background:#ececec;"></div>
<div class="abs td" style="left:7px;top:670.4px;font-size:10px;">L</div>
<div class="abs td" style="left:24.2px;top:669.2px;font-size:10px;">R</div>
<div class="abs" style="left:41px;top:668.9px;width:19px;height:18px;background:#00b400;"></div>
<div class="abs" style="left:112px;top:667.9px;width:292.2px;height:15.5px;border:1px solid #b4b4b4;border-radius:6px;background:#fff;"></div>
<div class="abs" style="left:389.0px;top:668.9px;width:1px;height:15.5px;background:#c4c4c4;"></div>
<div class="abs td" style="left:132.0px;top:669.9px;letter-spacing:-0.28px;">Min({Balaclava[Gas Producing Well]:Gas Productio...</div>
<div class="abs td" style="left:1105.6px;top:670.6px;">13.62</div>
<svg class="abs" style="left:0;top:0" width="1511" height="707" viewBox="0 0 1511 707">
<polyline points="64,621.3 70.6,611.6 76,618.3 85.7,607.9" fill="none" stroke="#111" stroke-width="1.9"/>
<rect x="90.4" y="608.6" width="12.2" height="12.2" fill="#fff" stroke="#444" stroke-width="1.1"/>
<path d="M92.7 614.9 L95.9 618.3 L100.8 610.9" fill="none" stroke="#111" stroke-width="2.1"/>
<path d="M299.7 611.5 l4.4 4.4 m0 -4.4 l-4.4 4.4" fill="none" stroke="#555" stroke-width="1"/>
<path d="M169.7 613.7h7.6m-2.6 -2.2l2.7 2.2l-2.7 2.2" fill="none" stroke="#111" stroke-width="1.1"/>
<path d="M216.0 613.7h7.6m-2.6 -2.2l2.7 2.2l-2.7 2.2" fill="none" stroke="#111" stroke-width="1.1"/>
<g transform="translate(118,607.1)"><path d="M0 11.5H12.1" stroke="#7cc243" stroke-width="1"/><rect x="1" y="8.1" width="2" height="1.8" fill="#7cc243"/><rect x="2.1" y="3.4" width="0.9" height="3.5" fill="#1e9be9"/><path d="M1 3.5H8.4L10.2 1.6" fill="none" stroke="#1e9be9" stroke-width="1"/><path d="M9.2 1.6L10.2 0.2L11.2 1.6V4.8H9.2Z" fill="#1e9be9"/><path d="M5 4.6H6.1V6.2L6.9 7V9.9H4.1V7L5 6.2Z" fill="#1e9be9"/><rect x="10.1" y="6.3" width="1" height="3.6" fill="#1e9be9"/></g>
<circle cx="399.5" cy="613.3" r="6.4" fill="#9e9e9e"/><rect x="398.3" y="609.2" width="2.4" height="2" fill="#fff"/><path d="M397.6 611.9H400.8V615.7H401.8V617.1H397.4V615.7H398.5V613.2H397.6Z" fill="#fff"/>
<g transform="translate(437.3,606.1) scale(1.16)"><path d="M1.8 3.4V10.6Q1.8 11.8 3 11.8H7.6Q8.8 11.8 8.8 10.6V3.4" fill="none" stroke="#444" stroke-width="1.15"/><path d="M0.4 2.8H10.2M3.6 2.6V1.2H7V2.6" fill="none" stroke="#444" stroke-width="1.15"/><path d="M3.7 4.6V9.8M5.3 4.6V9.8M6.9 4.6V9.8" stroke="#444" stroke-width="0.9"/></g>
<path d="M1379.8 611.1 l6.4 6.4 m0 -6.4 l-6.4 6.4" fill="none" stroke="#555" stroke-width="2.5"/>
<path d="M1461.1 611.1 l6.4 6.4 m0 -6.4 l-6.4 6.4" fill="none" stroke="#555" stroke-width="2.5"/>
<polyline points="64,642.5 70.6,632.9 76,639.5 85.7,629.1" fill="none" stroke="#111" stroke-width="1.9"/>
<rect x="90.4" y="629.9" width="12.2" height="12.2" fill="#fff" stroke="#444" stroke-width="1.1"/>
<path d="M92.7 636.1 L95.9 639.5 L100.8 632.1" fill="none" stroke="#111" stroke-width="2.1"/>
<path d="M302.4 632.8 l4.4 4.4 m0 -4.4 l-4.4 4.4" fill="none" stroke="#555" stroke-width="1"/>
<path d="M169.7 635.0h7.6m-2.6 -2.2l2.7 2.2l-2.7 2.2" fill="none" stroke="#111" stroke-width="1.1"/>
<path d="M216.0 635.0h7.6m-2.6 -2.2l2.7 2.2l-2.7 2.2" fill="none" stroke="#111" stroke-width="1.1"/>
<g transform="translate(118,628.4)"><path d="M0 11.5H12.1" stroke="#7cc243" stroke-width="1"/><rect x="1" y="8.1" width="2" height="1.8" fill="#7cc243"/><rect x="2.1" y="3.4" width="0.9" height="3.5" fill="#1e9be9"/><path d="M1 3.5H8.4L10.2 1.6" fill="none" stroke="#1e9be9" stroke-width="1"/><path d="M9.2 1.6L10.2 0.2L11.2 1.6V4.8H9.2Z" fill="#1e9be9"/><path d="M5 4.6H6.1V6.2L6.9 7V9.9H4.1V7L5 6.2Z" fill="#1e9be9"/><rect x="10.1" y="6.3" width="1" height="3.6" fill="#1e9be9"/></g>
<circle cx="399.5" cy="634.6" r="6.4" fill="#9e9e9e"/><rect x="398.3" y="630.5" width="2.4" height="2" fill="#fff"/><path d="M397.6 633.2H400.8V637.0H401.8V638.4H397.4V637.0H398.5V634.5H397.6Z" fill="#fff"/>
<g transform="translate(437.3,627.4) scale(1.16)"><path d="M1.8 3.4V10.6Q1.8 11.8 3 11.8H7.6Q8.8 11.8 8.8 10.6V3.4" fill="none" stroke="#444" stroke-width="1.15"/><path d="M0.4 2.8H10.2M3.6 2.6V1.2H7V2.6" fill="none" stroke="#444" stroke-width="1.15"/><path d="M3.7 4.6V9.8M5.3 4.6V9.8M6.9 4.6V9.8" stroke="#444" stroke-width="0.9"/></g>
<polyline points="64,663.8 70.6,654.1 76,660.8 85.7,650.4" fill="none" stroke="#111" stroke-width="1.9"/>
<rect x="90.4" y="651.1" width="12.2" height="12.2" fill="#fff" stroke="#444" stroke-width="1.1"/>
<path d="M92.7 657.4 L95.9 660.8 L100.8 653.4" fill="none" stroke="#111" stroke-width="2.1"/>
<path d="M204.6 654.0 l4.4 4.4 m0 -4.4 l-4.4 4.4" fill="none" stroke="#555" stroke-width="1"/>
<g transform="translate(118.2,650.2)"><path d="M0.6 0.6H4.6L10 6L6 10L0.6 4.6Z" fill="#111"/><circle cx="2.6" cy="2.6" r="0.9" fill="#fff"/></g>
<circle cx="399.5" cy="655.8" r="6.4" fill="#9e9e9e"/><rect x="398.3" y="651.7" width="2.4" height="2" fill="#fff"/><path d="M397.6 654.4H400.8V658.2H401.8V659.6H397.4V658.2H398.5V655.7H397.6Z" fill="#fff"/>
<g transform="translate(437.3,648.6) scale(1.16)"><path d="M1.8 3.4V10.6Q1.8 11.8 3 11.8H7.6Q8.8 11.8 8.8 10.6V3.4" fill="none" stroke="#444" stroke-width="1.15"/><path d="M0.4 2.8H10.2M3.6 2.6V1.2H7V2.6" fill="none" stroke="#444" stroke-width="1.15"/><path d="M3.7 4.6V9.8M5.3 4.6V9.8M6.9 4.6V9.8" stroke="#444" stroke-width="0.9"/></g>
<path d="M1379.8 653.6 l6.4 6.4 m0 -6.4 l-6.4 6.4" fill="none" stroke="#555" stroke-width="2.5"/>
<path d="M1461.1 653.6 l6.4 6.4 m0 -6.4 l-6.4 6.4" fill="none" stroke="#555" stroke-width="2.5"/>
<polyline points="64,685.0 70.6,675.4 76,682.0 85.7,671.6" fill="none" stroke="#111" stroke-width="1.9"/>
<rect x="90.4" y="672.4" width="12.2" height="12.2" fill="#fff" stroke="#444" stroke-width="1.1"/>
<path d="M92.7 678.6 L95.9 682.0 L100.8 674.6" fill="none" stroke="#111" stroke-width="2.1"/>
<path d="M395.2 675.3 l4.4 4.4 m0 -4.4 l-4.4 4.4" fill="none" stroke="#555" stroke-width="1"/>
<g transform="translate(118.4,671.5)"><rect x="0.5" y="0.5" width="9" height="10" fill="none" stroke="#222" stroke-width="1.1"/><rect x="1.6" y="1.6" width="6.8" height="2.2" fill="#222"/><path d="M0.5 5.8H9.5M0.5 8.2H9.5M3.5 4V10.5M6.5 4V10.5" stroke="#222" stroke-width="0.9"/></g>
<g transform="translate(437.3,669.9) scale(1.16)"><path d="M1.8 3.4V10.6Q1.8 11.8 3 11.8H7.6Q8.8 11.8 8.8 10.6V3.4" fill="none" stroke="#444" stroke-width="1.15"/><path d="M0.4 2.8H10.2M3.6 2.6V1.2H7V2.6" fill="none" stroke="#444" stroke-width="1.15"/><path d="M3.7 4.6V9.8M5.3 4.6V9.8M6.9 4.6V9.8" stroke="#444" stroke-width="0.9"/></g>
<g transform="translate(414.3,607.3) scale(1.1)"><rect x="0.5" y="0.5" width="8.6" height="10" fill="none" stroke="#666" stroke-width="1"/><rect x="1.6" y="1.6" width="6.4" height="2" fill="#666"/><path d="M0.5 5.6H9M0.5 8H9M3.4 4V10.5M6.2 4V10.5" stroke="#666" stroke-width="0.9"/></g>
<g transform="translate(414.3,628.6) scale(1.1)"><rect x="0.5" y="0.5" width="8.6" height="10" fill="none" stroke="#666" stroke-width="1"/><rect x="1.6" y="1.6" width="6.4" height="2" fill="#666"/><path d="M0.5 5.6H9M0.5 8H9M3.4 4V10.5M6.2 4V10.5" stroke="#666" stroke-width="0.9"/></g>
<g transform="translate(414.3,649.8) scale(1.1)"><rect x="0.5" y="0.5" width="8.6" height="10" fill="none" stroke="#666" stroke-width="1"/><rect x="1.6" y="1.6" width="6.4" height="2" fill="#666"/><path d="M0.5 5.6H9M0.5 8H9M3.4 4V10.5M6.2 4V10.5" stroke="#666" stroke-width="0.9"/></g>
<g transform="translate(414.3,671.1) scale(1.1)"><rect x="0.5" y="0.5" width="8.6" height="10" fill="none" stroke="#666" stroke-width="1"/><rect x="1.6" y="1.6" width="6.4" height="2" fill="#666"/><path d="M0.5 5.6H9M0.5 8H9M3.4 4V10.5M6.2 4V10.5" stroke="#666" stroke-width="0.9"/></g>
<g transform="translate(414.3,692.3) scale(1.1)"><rect x="0.5" y="0.5" width="8.6" height="10" fill="none" stroke="#666" stroke-width="1"/><rect x="1.6" y="1.6" width="6.4" height="2" fill="#666"/><path d="M0.5 5.6H9M0.5 8H9M3.4 4V10.5M6.2 4V10.5" stroke="#666" stroke-width="0.9"/></g>
<rect x="1496" y="582" width="15" height="125" fill="#f1f1f1"/>
<rect x="1496.5" y="615.6" width="14.5" height="59.2" fill="#c8c8c8"/>
<path d="M1498.9 607.2 L1504.5 601 L1510.1 607.2" fill="none" stroke="#4a4a4a" stroke-width="2.1"/>
<path d="M1498.9 683.6 L1504.5 689.8 L1510.1 683.6" fill="none" stroke="#4a4a4a" stroke-width="2.1"/>
</svg>
</div></body></html>
